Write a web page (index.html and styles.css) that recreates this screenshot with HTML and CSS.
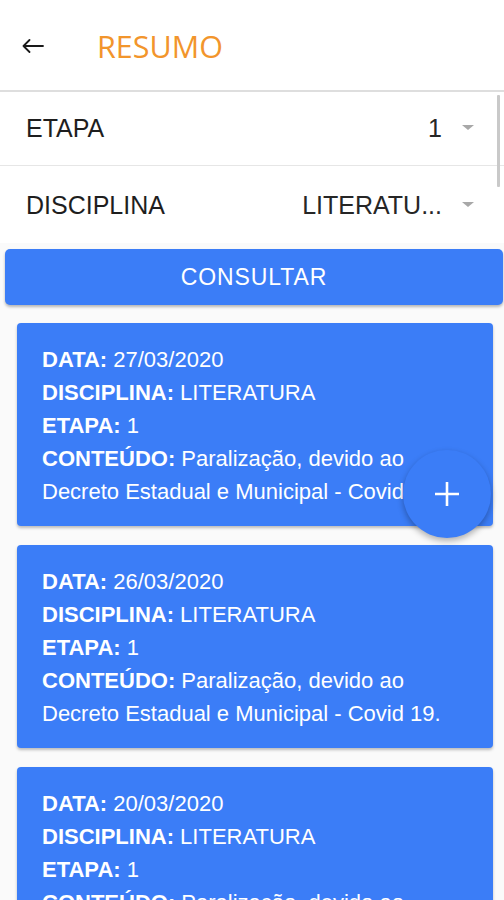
FILE: index.html
```html
<!DOCTYPE html>
<html lang="pt-BR">
<head>
<meta charset="utf-8">
<title>Resumo</title>
<link rel="stylesheet" href="styles.css">
</head>
<body>
<header class="topbar">
  <button class="back" aria-label="Voltar">
    <svg width="22" height="14" viewBox="0 0 22 14" aria-hidden="true">
      <path d="M21 7H1.5M7.5 1L1.5 7L7.5 13" fill="none" stroke="#1a1a1a" stroke-width="1.8" stroke-linecap="round" stroke-linejoin="round"/>
    </svg>
  </button>
  <h1 class="title">RESUMO</h1>
</header>

<section class="filters">
  <div class="row">
    <span class="label">ETAPA</span>
    <span class="select"><span class="value">1</span><span class="caret"></span></span>
  </div>
  <div class="row row-last">
    <span class="label">DISCIPLINA</span>
    <span class="select"><span class="value">LITERATU...</span><span class="caret"></span></span>
  </div>
  <div class="scrollthumb"></div>
</section>

<div class="actions">
  <button class="consult">CONSULTAR</button>
</div>

<main class="list">
  <article class="card">
    <p><b>DATA:</b> 27/03/2020</p>
    <p><b>DISCIPLINA:</b> LITERATURA</p>
    <p><b>ETAPA:</b> 1</p>
    <p><b>CONTEÚDO:</b> Paralização, devido ao Decreto Estadual e Municipal - Covid 19.</p>
  </article>
  <article class="card">
    <p><b>DATA:</b> 26/03/2020</p>
    <p><b>DISCIPLINA:</b> LITERATURA</p>
    <p><b>ETAPA:</b> 1</p>
    <p><b>CONTEÚDO:</b> Paralização, devido ao Decreto Estadual e Municipal - Covid 19.</p>
  </article>
  <article class="card">
    <p><b>DATA:</b> 20/03/2020</p>
    <p><b>DISCIPLINA:</b> LITERATURA</p>
    <p><b>ETAPA:</b> 1</p>
    <p><b>CONTEÚDO:</b> Paralização, devido ao Decreto Estadual e Municipal - Covid 19.</p>
  </article>
</main>

<button class="fab" aria-label="Adicionar">
  <svg width="26" height="26" viewBox="0 0 26 26" aria-hidden="true">
    <path d="M13 1V25M1 13H25" stroke="#fff" stroke-width="2.6"/>
  </svg>
</button>
</body>
</html>
```

FILE: styles.css
```css
html, body {
  margin: 0;
  padding: 0;
  overflow: hidden;
  height: 900px;
}
body {
  background: #fafafa;
  font-family: "Liberation Sans", Arial, sans-serif;
  color: #222;
}
.topbar {
  height: 90px;
  background: #fff;
  display: flex;
  align-items: center;
  border-bottom: 2px solid #dedede;
  box-sizing: content-box;
}
.back {
  border: 0;
  background: none;
  padding: 0;
  margin: 2px 0 0 22px;
  width: 22px;
  height: 14px;
  display: flex;
}
.title {
  margin: 2px 0 0 53px;
  font-family: "Open Sans", sans-serif;
  font-weight: 400;
  font-size: 30.5px;
  color: #f2952c;
  letter-spacing: 0;
}
.filters {
  position: relative;
  background: #fff;
}
.row {
  display: flex;
  align-items: center;
  justify-content: space-between;
  height: 73px;
  padding: 0 30px 0 26px;
  border-bottom: 1.5px solid #e6e6e6;
  font-size: 25px;
}
.row-last {
  height: 76px;
  border-bottom: 0;
  padding-top: 1px;
}
.label {
  color: #1e1e1e;
}
.select {
  display: flex;
  align-items: center;
  gap: 20px;
  color: #262626;
}
.caret {
  width: 0;
  height: 0;
  border-left: 6.5px solid transparent;
  border-right: 6.5px solid transparent;
  border-top: 5.5px solid #a8a8a8;
  margin-top: -2px;
}
.scrollthumb {
  position: absolute;
  right: 4px;
  top: 3px;
  width: 3px;
  height: 92px;
  background: #c9c9c9;
  border-radius: 1px;
}
.actions {
  padding: 6px 1px 0 5px;
}
.consult {
  width: 100%;
  height: 56px;
  border: 0;
  border-radius: 5px;
  background: #3b7df7;
  color: #fff;
  font-family: "Liberation Sans", Arial, sans-serif;
  font-size: 23px;
  letter-spacing: 0.9px;
  box-shadow: 0 2px 3px rgba(0,0,0,0.28);
  padding: 0;
}
.list {
  display: flex;
  flex-direction: column;
  gap: 19px;
  padding: 18px 11px 0 17px;
}
.card {
  background: #3b7df7;
  border-radius: 4px;
  color: #fff;
  padding: 20px 20px 18px 25px;
  box-shadow: 0 2px 3px rgba(0,0,0,0.25);
  font-size: 22px;
  line-height: 33px;
  height: 165px;
}
.card p {
  margin: 0;
}
.card b {
  font-weight: 700;
}
.fab {
  position: fixed;
  left: 403px;
  top: 450px;
  width: 88px;
  height: 88px;
  border-radius: 50%;
  border: 0;
  padding: 0;
  background: #3b7df7;
  box-shadow: 0 3px 6px rgba(0,0,0,0.3);
  display: flex;
  align-items: center;
  justify-content: center;
}
```
